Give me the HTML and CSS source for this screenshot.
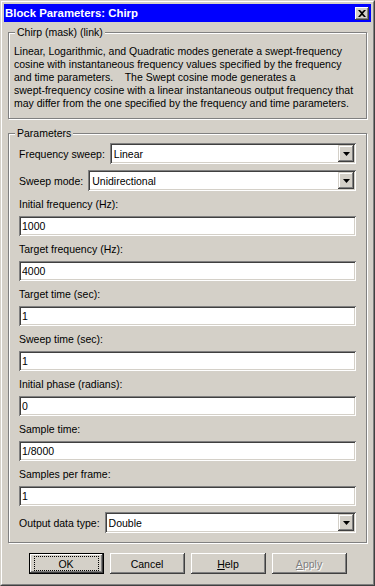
FILE: index.html
```html
<!doctype html>
<html lang="en-US">
  <head>
    <meta charset="utf-8" />
    <title>Block Parameters: Chirp</title>
    <link rel="stylesheet" href="styles.css">
  </head>
  <body>
    <div class="window">
      <div class="frame">
        <div class="titlebar">
          <span class="title">Block Parameters: Chirp</span>
          <span class="close-btn">
            <svg width="8" height="7" viewBox="0 0 8 7"><path d="M0 0h2l2 2 2-2h2l-3 3.5 3 3.5h-2l-2-2-2 2h-2l3-3.5z" fill="#000"/></svg>
          </span>
        </div>

        <fieldset class="group">
          <legend>Chirp (mask) (link)</legend>
          <p class="desc">Linear, Logarithmic, and Quadratic modes generate a swept-frequency<br>
            cosine with instantaneous frequency values specified by the frequency<br>
            and time parameters.&nbsp;&nbsp;&nbsp; The Swept cosine mode generates a<br>
            swept-frequency cosine with a linear instantaneous output frequency that<br>
            may differ from the one specified by the frequency and time parameters.</p>
        </fieldset>

        <fieldset class="group">
          <legend>Parameters</legend>
          <div class="params">
            <div class="combo-row">
              <label>Frequency sweep:</label>
              <div class="combo"><span class="combo-text">Linear</span><span class="drop"><svg width="7" height="4" viewBox="0 0 7 4"><path d="M0 0h7l-3.5 4z" fill="#000"/></svg></span></div>
            </div>
            <div class="combo-row">
              <label>Sweep mode:</label>
              <div class="combo"><span class="combo-text">Unidirectional</span><span class="drop"><svg width="7" height="4" viewBox="0 0 7 4"><path d="M0 0h7l-3.5 4z" fill="#000"/></svg></span></div>
            </div>
            <div class="field">
              <label>Initial frequency (Hz):</label>
              <input class="edit" type="text" value="1000">
            </div>
            <div class="field">
              <label>Target frequency (Hz):</label>
              <input class="edit" type="text" value="4000">
            </div>
            <div class="field">
              <label>Target time (sec):</label>
              <input class="edit" type="text" value="1">
            </div>
            <div class="field">
              <label>Sweep time (sec):</label>
              <input class="edit" type="text" value="1">
            </div>
            <div class="field">
              <label>Initial phase (radians):</label>
              <input class="edit" type="text" value="0">
            </div>
            <div class="field">
              <label>Sample time:</label>
              <input class="edit" type="text" value="1/8000">
            </div>
            <div class="field">
              <label>Samples per frame:</label>
              <input class="edit" type="text" value="1">
            </div>
            <div class="combo-row last">
              <label>Output data type:</label>
              <div class="combo"><span class="combo-text">Double</span><span class="drop"><svg width="7" height="4" viewBox="0 0 7 4"><path d="M0 0h7l-3.5 4z" fill="#000"/></svg></span></div>
            </div>
          </div>
        </fieldset>

        <div class="buttons">
          <button class="btn default"><span class="focus">OK</span></button>
          <button class="btn">Cancel</button>
          <button class="btn"><u>H</u>elp</button>
          <button class="btn disabled"><u>A</u>pply</button>
        </div>
      </div>
    </div>
  </body>
</html>
```

FILE: styles.css
```css
body {
  margin: 0;
  background-color: #d4d0c8;
  color: #000;
  font-family: "Liberation Sans", Arial, sans-serif;
  font-size: 10.5px;
}
.window {
  width: 375px;
  height: 586px;
  box-sizing: border-box;
  border: 1px solid;
  border-color: #d4d0c8 #404040 #404040 #d4d0c8;
}
.frame {
  height: 100%;
  box-sizing: border-box;
  border: 1px solid;
  border-color: #fff #808080 #808080 #fff;
  padding: 2px;
  display: flex;
  flex-direction: column;
}

/* title bar */
.titlebar {
  height: 18px;
  flex: none;
  background-color: #0000ff;
  display: flex;
  align-items: center;
  justify-content: space-between;
  padding: 0 2px 0 1px;
}
.title {
  color: #fff;
  font-weight: bold;
  font-size: 11.4px;
}
.close-btn {
  width: 14px;
  height: 13px;
  box-sizing: border-box;
  background-color: #d4d0c8;
  box-shadow: inset -1px -1px #404040, inset 1px 1px #fff, inset -2px -2px #808080;
  display: flex;
  align-items: center;
  justify-content: center;
}

/* group boxes */
.group {
  margin: 4px 4px 0;
  padding: 0;
  min-width: 0;
  border: 1px solid #808080;
  box-shadow: inset 1px 1px #fff, 1px 1px #fff;
}
.group + .group { margin-top: 8px; }
.group legend {
  margin-left: 6px;
  padding: 0 2px;
  line-height: 12px;
  background-color: #d4d0c8;
}
.desc {
  margin: 0;
  padding: 7px 5px 8px;
  line-height: 13px;
  white-space: nowrap;
}
.params {
  display: flex;
  flex-direction: column;
  padding: 4px 10px 9px;
}

/* rows */
.combo-row {
  display: flex;
  align-items: center;
  gap: 5px;
}
.combo-row + .combo-row { margin-top: 6px; }
.combo-row.last { margin-top: 6px; }
.field {
  display: flex;
  flex-direction: column;
  margin-top: 7px;
}
.field label {
  line-height: 13px;
  margin-bottom: 5px;
}

/* sunken controls */
.edit, .combo {
  box-sizing: border-box;
  background-color: #fff;
  box-shadow: inset 1px 1px #808080, inset -1px -1px #fff, inset 2px 2px #404040, inset -2px -2px #d4d0c8;
}
.edit {
  width: 100%;
  height: 20px;
  border: none;
  padding: 0 3px;
  margin: 0;
  font: inherit;
  color: #000;
  outline: none;
}
.combo {
  flex: 1;
  height: 21px;
  display: flex;
  align-items: center;
  padding: 2px;
}
.combo-text { padding-left: 2px; }
.drop {
  margin-left: auto;
  width: 16px;
  height: 17px;
  background-color: #d4d0c8;
  box-shadow: inset -1px -1px #404040, inset 1px 1px #d4d0c8, inset -2px -2px #808080, inset 2px 2px #fff;
  display: flex;
  align-items: center;
  justify-content: center;
}

/* buttons */
.buttons {
  display: flex;
  justify-content: center;
  gap: 6px;
  margin-top: 10px;
}
.btn {
  width: 75px;
  height: 21px;
  padding: 0;
  border: none;
  background-color: #d4d0c8;
  box-shadow: inset -1px -1px #404040, inset 1px 1px #fff, inset -2px -2px #808080;
  font: inherit;
  color: #000;
}
.btn.default {
  border: 1px solid #000;
  display: flex;
  align-items: center;
  justify-content: center;
}
.btn .focus {
  display: flex;
  align-items: center;
  justify-content: center;
  width: 63px;
  height: 13px;
  border: 1px dotted #000;
}
.btn.disabled {
  color: #808080;
  text-shadow: 1px 1px #fff;
}
```
